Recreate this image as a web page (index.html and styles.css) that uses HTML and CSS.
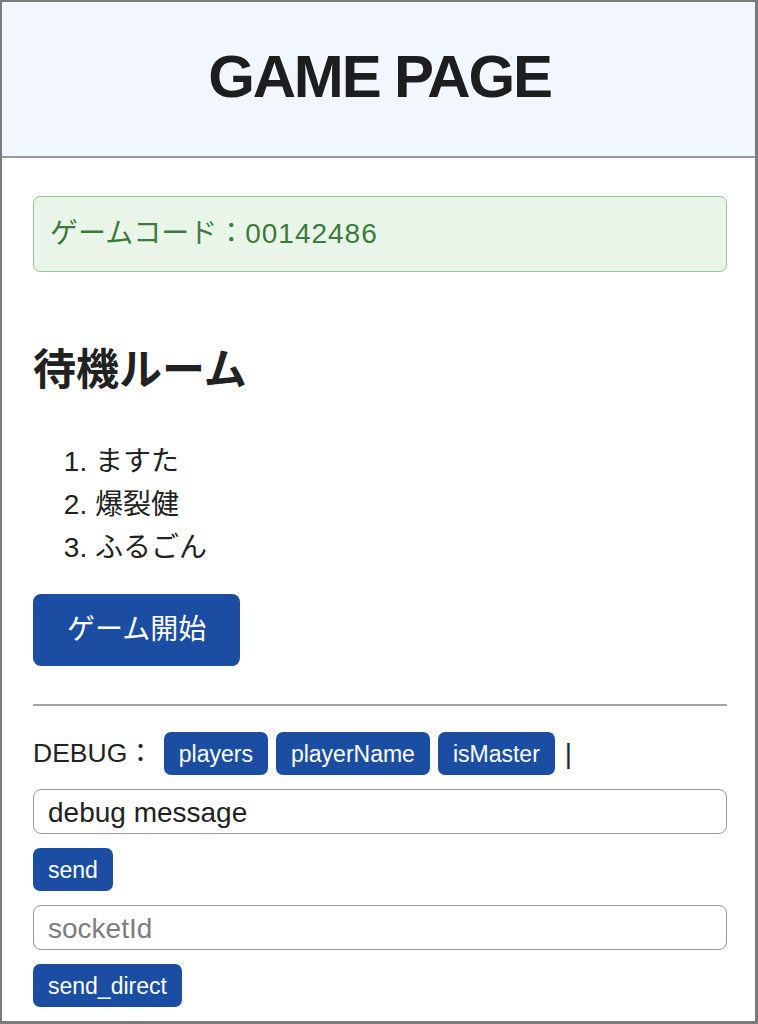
FILE: index.html
```html
<!DOCTYPE html>
<html lang="ja">
<head>
    <meta charset="UTF-8">
    <meta name="viewport" content="width=device-width, initial-scale=1.0">
    <title>GAME PAGE</title>
    <link rel="stylesheet" href="styles.css">
</head>
<body>
    <div class="page">
        <header class="page-header">
            <h1>GAME PAGE</h1>
        </header>

        <div class="container">
            <div class="alert">ゲームコード：<span class="code">00142486</span></div>

            <h2>待機ルーム</h2>
            <ol class="player-list">
                <li>ますた</li>
                <li>爆裂健</li>
                <li>ふるごん</li>
            </ol>

            <button class="btn btn-lg">ゲーム開始</button>

            <hr>

            <!-- debug tools -->
            <div class="debug-row">
                <span class="debug-label">DEBUG：</span>
                <button class="btn btn-sm">players</button>
                <button class="btn btn-sm">playerName</button>
                <button class="btn btn-sm">isMaster</button>
                <span class="sep">|</span>
            </div>
            <input class="field" type="text" value="debug message">
            <button class="btn btn-sm">send</button>
            <input class="field" type="text" placeholder="socketId">
            <button class="btn btn-sm">send_direct</button>
        </div>
    </div>
</body>
</html>
```

FILE: styles.css
```css
/* General Reset */
* {
    margin: 0;
    padding: 0;
    box-sizing: border-box;
}

body {
    font-family: 'Liberation Sans', 'Noto Sans CJK JP', sans-serif;
    color: #222;
    background: #fff;
    font-size: 28px;
    line-height: 1.5;
}

/* gray frame round the whole window */
.page {
    height: 1024px;
    overflow: hidden;
    border: 2px solid #7b7b7b;
    border-right-width: 3px;
    border-bottom-width: 3px;
}

.page-header {
    background: #f2f6fd;
    border-bottom: 2px solid #9a9a9a;
    height: 156px;
    display: flex;
    align-items: center;
    justify-content: center;
}

.page-header h1 {
    font-size: 60px;
    font-weight: bold;
    letter-spacing: -2.2px;
    line-height: 1;
    color: #1e1e1e;
    margin-left: 2px;
    margin-bottom: 4px;
}

.container {
    padding: 38px 28px 0 31px;
}

.alert {
    background: #eaf5ea;
    border: 1px solid #90c890;
    border-radius: 7px;
    color: #3d7b3d;
    padding: 16px 16px;
    line-height: 42px;
}

.alert .code {
    letter-spacing: 1px;
}

h2 {
    font-size: 43px;
    font-weight: bold;
    line-height: 50px;
    margin-top: 73px;
    margin-bottom: 45px;
}

.player-list {
    padding-left: 62px;
    line-height: 43px;
    margin-bottom: 25px;
}

.btn {
    display: inline-block;
    font-family: inherit;
    background: #1b4ea3;
    color: #fff;
    border: none;
    cursor: pointer;
}

.btn-lg {
    font-size: 28px;
    line-height: 42px;
    padding: 15px 34px;
    border-radius: 8px;
}

.btn-sm {
    font-size: 23px;
    line-height: 33px;
    padding: 6px 15px 4px;
    border-radius: 7px;
}

hr {
    border: none;
    border-top: 2px solid #a2a2a2;
    margin: 38px 0 26px;
}

.debug-row {
    display: flex;
    align-items: center;
    gap: 8px;
    margin-bottom: 14px;
}

.debug-label {
    font-size: 26.5px;
    margin-right: 2px;
}

.sep {
    margin-left: 2px;
}

.field {
    display: block;
    width: 100%;
    height: 45px;
    font-family: inherit;
    font-size: 28px;
    color: #222;
    padding: 2px 14px 0;
    border: 1.5px solid #9b9b9b;
    border-radius: 8px;
    margin-bottom: 14px;
}

.field::placeholder {
    color: #7d7d7d;
}

.container > .btn-sm {
    display: block;
    margin-bottom: 14px;
}
```
